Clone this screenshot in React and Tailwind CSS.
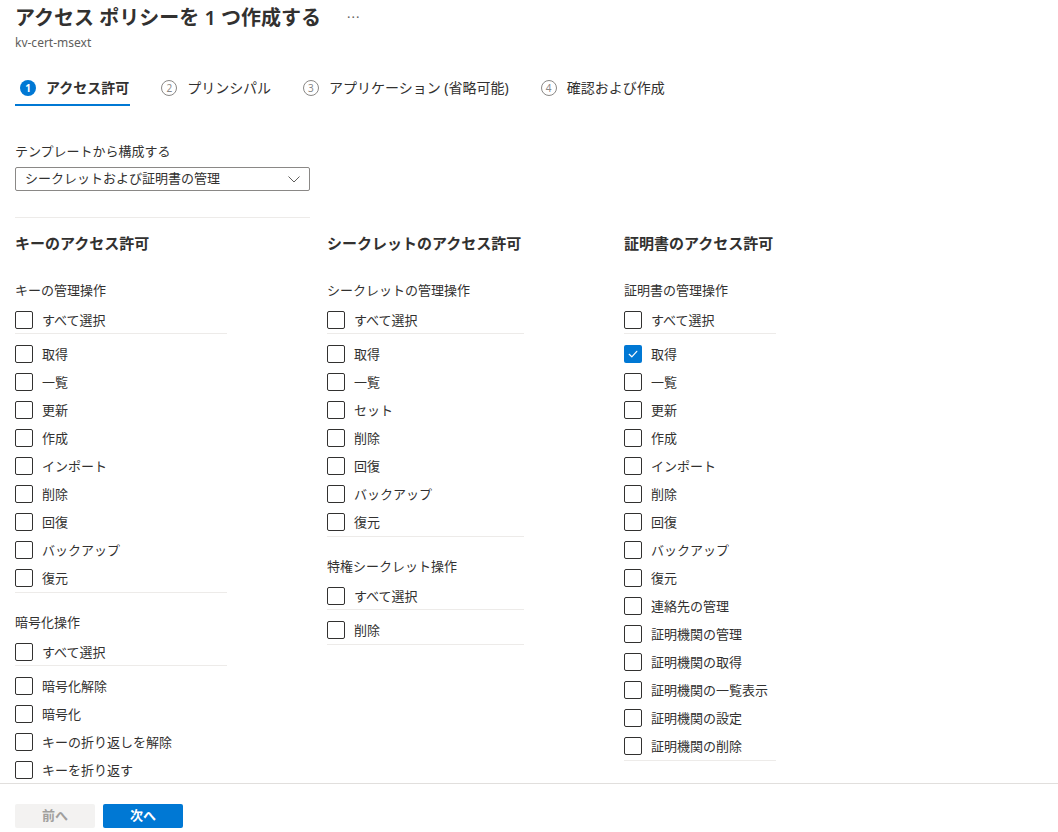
import { useState } from 'react';

const FONT = { fontFamily: '"Segoe UI", "Noto Sans", "Noto Sans CJK JP", sans-serif' };

const tabs = [
  { n: 1, label: 'アクセス許可' },
  { n: 2, label: 'プリンシパル' },
  { n: 3, label: 'アプリケーション (省略可能)' },
  { n: 4, label: '確認および作成' },
];

const columns = [
  {
    title: 'キーのアクセス許可',
    width: 'w-[212px]',
    sections: [
      { label: 'キーの管理操作', items: ['取得', '一覧', '更新', '作成', 'インポート', '削除', '回復', 'バックアップ', '復元'] },
      { label: '暗号化操作', items: ['暗号化解除', '暗号化', 'キーの折り返しを解除', 'キーを折り返す'] },
    ],
  },
  {
    title: 'シークレットのアクセス許可',
    width: 'w-[197px]',
    sections: [
      { label: 'シークレットの管理操作', items: ['取得', '一覧', 'セット', '削除', '回復', 'バックアップ', '復元'] },
      { label: '特権シークレット操作', items: ['削除'] },
    ],
  },
  {
    title: '証明書のアクセス許可',
    width: 'w-[152px]',
    sections: [
      {
        label: '証明書の管理操作',
        items: ['取得', '一覧', '更新', '作成', 'インポート', '削除', '回復', 'バックアップ', '復元', '連絡先の管理', '証明機関の管理', '証明機関の取得', '証明機関の一覧表示', '証明機関の設定', '証明機関の削除'],
        checked: ['取得'],
      },
    ],
  },
];

function Checkbox({ checked }) {
  return checked ? (
    <span className="w-[18px] h-[18px] rounded-[2px] bg-[#0078d4] flex items-center justify-center shrink-0">
      <svg width="12" height="12" viewBox="0 0 12 12" fill="none" stroke="white" strokeWidth="1.2" strokeLinecap="round" strokeLinejoin="round">
        <polyline points="2.2,6.3 4.8,8.8 9.8,3.3" />
      </svg>
    </span>
  ) : (
    <span className="w-[18px] h-[18px] rounded-[2px] border border-[#323130] bg-white shrink-0" />
  );
}

function Row({ label, checked }) {
  const [on, setOn] = useState(!!checked);
  return (
    <label className="h-7 flex items-center gap-[9px] cursor-pointer" onClick={(e) => { e.preventDefault(); setOn(!on); }}>
      <Checkbox checked={on} />
      <span className="text-[13px] text-[#323130] leading-5">{label}</span>
    </label>
  );
}

function Section({ label, items, checked = [], first }) {
  return (
    <div className={first ? 'mt-[25px]' : 'mt-[19px]'}>
      <div className="text-[13px] leading-5 text-[#323130]">{label}</div>
      <div className="mt-[6px] h-7 border-b border-[#edebe9]">
        <Row label="すべて選択" />
      </div>
      <div className="pt-[6px] border-b border-[#edebe9]">
        {items.map((it, i) => (
          <Row key={i} label={it} checked={checked.includes(it)} />
        ))}
      </div>
    </div>
  );
}

export default function App() {
  return (
    <div className="h-screen flex flex-col bg-white text-[#323130]" style={FONT}>
      {/* scrollable content */}
      <div className="flex-1 min-h-0 overflow-hidden px-[15px]">
        <div className="pt-[4px] flex items-center">
          <h1 className="text-[20px] leading-[28px] font-semibold text-[#323130]">アクセス ポリシーを 1 つ作成する</h1>
          <span className="ml-[26px] text-[13px] text-[#605e5c] tracking-[1px]">···</span>
        </div>
        <div className="mt-[3px] text-[12px] leading-4 text-[#605e5c]">kv-cert-msext</div>

        {/* Wizard tabs */}
        <div className="mt-[27px] flex gap-[26px]">
          {tabs.map((t) => {
            const active = t.n === 1;
            return (
              <div
                key={t.n}
                className={`flex items-center gap-[10px] pl-[5px] pr-px pb-[6px] border-b-2 ${active ? 'border-[#0078d4]' : 'border-transparent'}`}
              >
                {active ? (
                  <span className="w-4 h-4 rounded-full bg-[#0078d4] text-white text-[10px] font-bold flex items-center justify-center leading-none">{t.n}</span>
                ) : (
                  <span className="w-4 h-4 rounded-full border border-[#8a8886] text-[#8a8886] text-[10px] flex items-center justify-center leading-none">{t.n}</span>
                )}
                <span className={`text-[14px] leading-5 text-[#323130] ${active ? 'font-semibold' : ''}`}>{t.label}</span>
              </div>
            );
          })}
        </div>

        {/* Template */}
        <div className="mt-[35px] text-[13px] leading-5">テンプレートから構成する</div>
        <div className="mt-[6px] w-[295px] h-6 border border-[#8a8886] rounded-[2px] flex items-center justify-between pl-[9px] pr-[9px]">
          <span className="text-[13px] text-[#323130]">シークレットおよび証明書の管理</span>
          <svg width="12" height="7" viewBox="0 0 12 7" fill="none" stroke="#605e5c" strokeWidth="1">
            <polyline points="0.5,0.5 6,6 11.5,0.5" />
          </svg>
        </div>
        <div className="mt-[26px] w-[295px] border-t border-[#edebe9]" />

        {/* Permission columns */}
        <div className="mt-[13px] flex gap-[100px]">
          {columns.map((col, ci) => (
            <div key={ci} className={`${col.width} shrink-0`}>
              <h2 className="text-[15px] leading-6 font-bold text-[#323130] whitespace-nowrap">{col.title}</h2>
              {col.sections.map((s, si) => (
                <Section key={si} first={si === 0} label={s.label} items={s.items} checked={s.checked} />
              ))}
            </div>
          ))}
        </div>
      </div>

      {/* Footer */}
      <div className="h-[49px] shrink-0 border-t border-[#e1dfdd] px-[15px] pt-5 flex gap-2">
        <button className="w-20 h-6 rounded-[2px] bg-[#f3f2f1] text-[#a19f9d] text-[13px] font-semibold">前へ</button>
        <button className="w-20 h-6 rounded-[2px] bg-[#0078d4] text-white text-[13px] font-semibold">次へ</button>
      </div>
    </div>
  );
}
